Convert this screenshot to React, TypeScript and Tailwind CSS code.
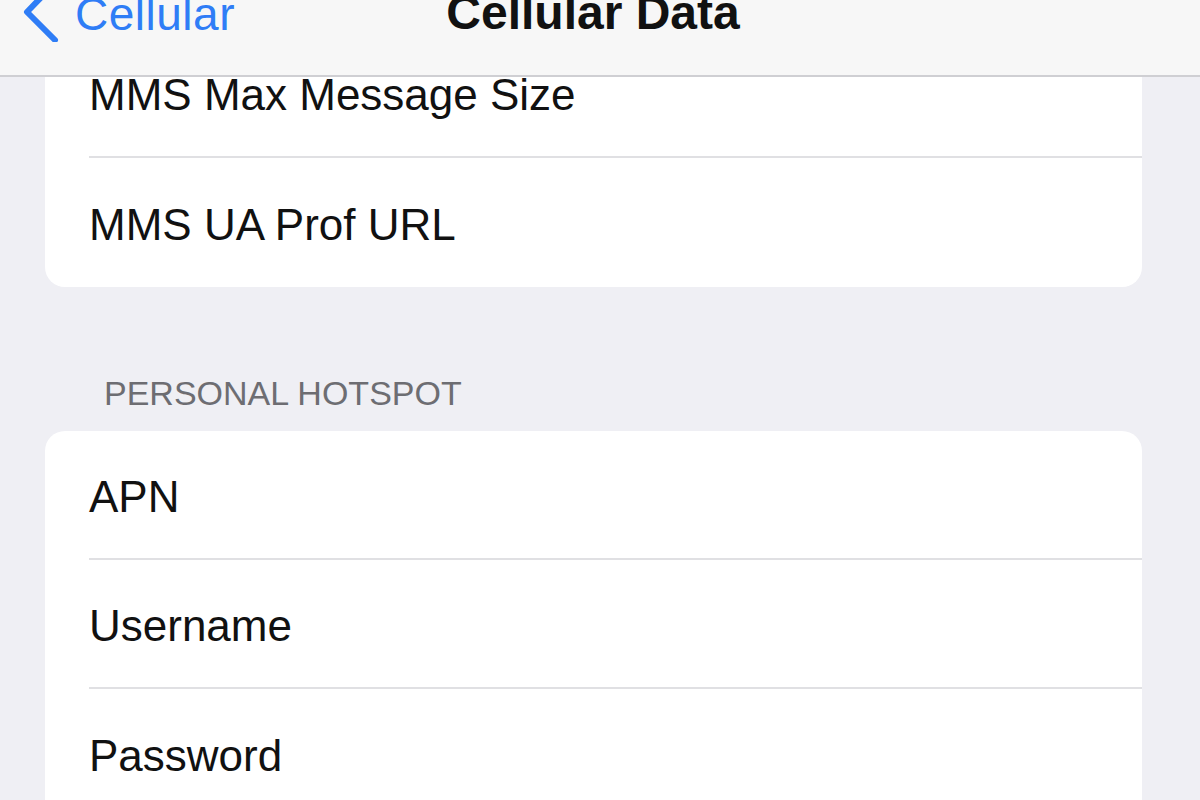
export default function App() {
  const topRows = ["MMS Max Message Size", "MMS UA Prof URL"];
  const hotspotRows = ["APN", "Username", "Password"];

  return (
    <div className="relative w-[1200px] h-[800px] overflow-hidden bg-[#efeff4] font-['Liberation_Sans',Arial,sans-serif] text-[#111]">
      {/* nav bar, sits over the scrolled list */}
      <div className="absolute top-0 left-0 right-0 z-10 h-[77px] bg-[#f7f7f7] border-b-2 border-[#cfcfd3] flex items-start">
        <div className="flex items-start w-[400px]">
          <svg width="40" height="60" viewBox="0 0 40 60" className="ml-[20px] mt-[-18px] shrink-0">
            <path d="M35 1 L7 30 L35 58" fill="none" stroke="#2f7df6" strokeWidth="6" strokeLinecap="round" strokeLinejoin="round" />
          </svg>
          <span className="ml-[15px] mt-[-9px] text-[46px] leading-[46px] text-[#2f7df6] tracking-[0.5px]">
            Cellular
          </span>
        </div>
        <div className="flex-1 flex justify-center mr-[400px] mt-[-11px]">
          <span className="text-[48px] leading-[48px] font-semibold translate-x-[-7px]">Cellular Data</span>
        </div>
      </div>

      <div className="pt-[29px] pl-[45px]">
        <div className="w-[1097px] bg-white rounded-b-[20px]">
          {topRows.map((r, i) => (
            <div key={r} className="pl-[44px]">
              <div
                className={
                  "h-[129px] pt-[5px] flex items-center text-[44px] leading-[52px] " +
                  (i < topRows.length - 1 ? "border-b-2 border-[#e0e0e3]" : "")
                }
              >
                {r}
              </div>
            </div>
          ))}
        </div>

        <div className="h-[144px] flex items-end pb-[18px] pl-[59px]">
          <span className="text-[34px] leading-[40px] text-[#6d6d72]">PERSONAL HOTSPOT</span>
        </div>

        <div className="w-[1097px] bg-white rounded-t-[20px]">
          {hotspotRows.map((r, i) => (
            <div key={r} className="pl-[44px]">
              <div
                className={
                  "h-[129px] pt-[5px] flex items-center text-[44px] leading-[52px] " +
                  (i < hotspotRows.length - 1 ? "border-b-2 border-[#e0e0e3]" : "")
                }
              >
                {r}
              </div>
            </div>
          ))}
        </div>
      </div>
    </div>
  );
}
